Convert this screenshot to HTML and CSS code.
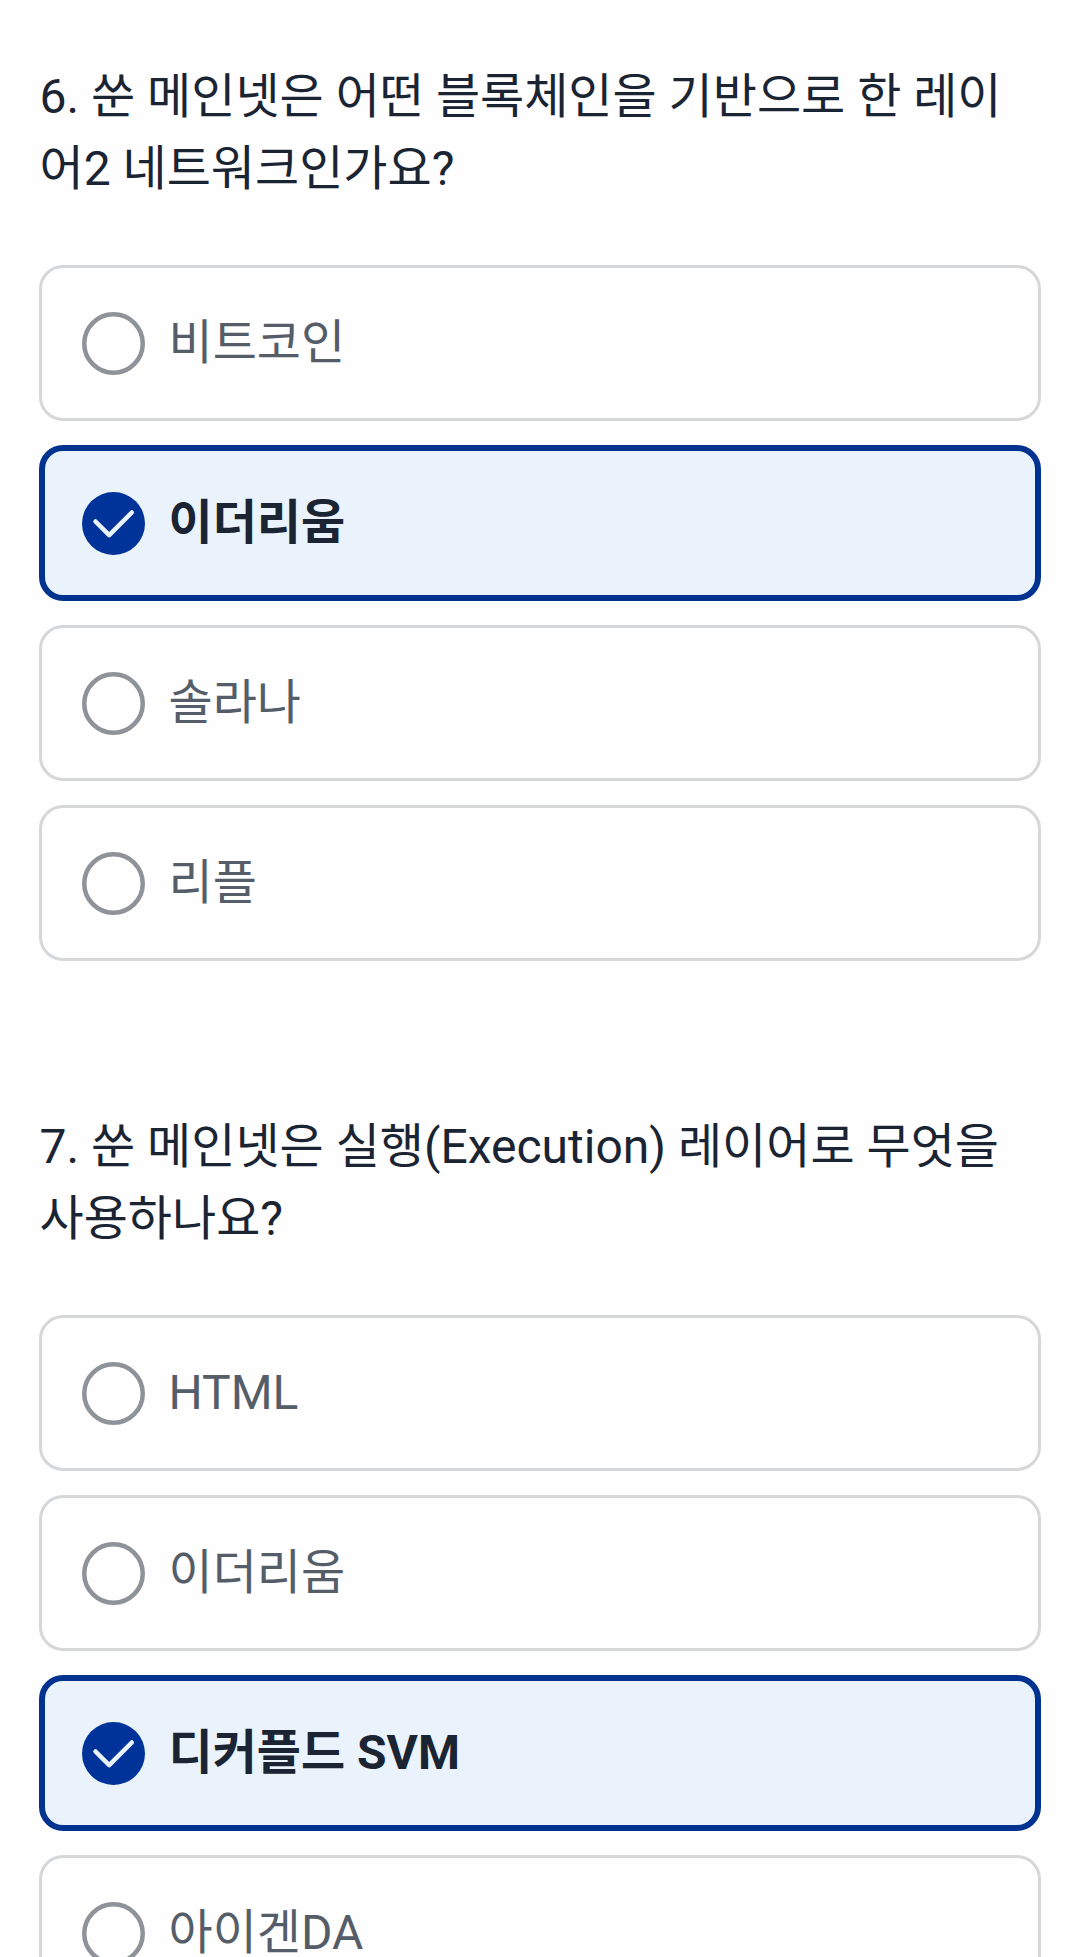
FILE: index.html
```html
<!DOCTYPE html>
<html lang="ko">
<head>
<meta charset="utf-8">
<title>퀴즈</title>
<link rel="stylesheet" href="styles.css">
</head>
<body>
<main class="quiz">
  <section class="question">
    <h2 class="title">6. 쑨 메인넷은 어떤 블록체인을 기반으로 한 레이어2 네트워크인가요?</h2>
    <ul class="options">
      <li class="option"><svg class="radio" viewBox="0 0 63 63"><circle cx="31.5" cy="31.5" r="29.25"/></svg><span class="label">비트코인</span></li>
      <li class="option selected"><svg class="check" viewBox="0 0 63 63"><circle cx="31.5" cy="31.5" r="31.5"/><path d="M13.5 29.5 27.2 43.2 49.8 20.5"/></svg><span class="label">이더리움</span></li>
      <li class="option"><svg class="radio" viewBox="0 0 63 63"><circle cx="31.5" cy="31.5" r="29.25"/></svg><span class="label">솔라나</span></li>
      <li class="option"><svg class="radio" viewBox="0 0 63 63"><circle cx="31.5" cy="31.5" r="29.25"/></svg><span class="label">리플</span></li>
    </ul>
  </section>
  <section class="question">
    <h2 class="title">7. 쑨 메인넷은 실행(Execution) 레이어로 무엇을 사용하나요?</h2>
    <ul class="options">
      <li class="option"><svg class="radio" viewBox="0 0 63 63"><circle cx="31.5" cy="31.5" r="29.25"/></svg><span class="label">HTML</span></li>
      <li class="option"><svg class="radio" viewBox="0 0 63 63"><circle cx="31.5" cy="31.5" r="29.25"/></svg><span class="label">이더리움</span></li>
      <li class="option selected"><svg class="check" viewBox="0 0 63 63"><circle cx="31.5" cy="31.5" r="31.5"/><path d="M13.5 29.5 27.2 43.2 49.8 20.5"/></svg><span class="label">디커플드 SVM</span></li>
      <li class="option"><svg class="radio" viewBox="0 0 63 63"><circle cx="31.5" cy="31.5" r="29.25"/></svg><span class="label">아이겐DA</span></li>
    </ul>
  </section>
</main>
</body>
</html>
```
FILE: styles.css
```css
* {
  box-sizing: border-box;
}

body {
  margin: 0;
  height: 1957px;
  overflow: hidden;
  background: #fefefe;
  color: #1b2433;
  font-family: Roboto, "Noto Sans CJK KR", sans-serif;
  font-size: 48px;
  line-height: 72px;
}

.quiz {
  display: flex;
  flex-direction: column;
  gap: 150px;
  padding: 61px 39px 0;
}

.title {
  margin: 0 0 60px;
  padding-left: 0.5px;
  font-size: 48px;
  font-weight: 400;
  word-break: break-all;
}

.options {
  display: flex;
  flex-direction: column;
  gap: 24px;
  margin: 0;
  padding: 0;
  list-style: none;
}

.option {
  display: flex;
  align-items: center;
  gap: 23.5px;
  height: 156px;
  padding: 0 40px;
  border: 3px solid #d6d7d9;
  border-radius: 24px;
  color: #555d69;
}

.selected {
  padding: 0 37px;
  border: 6px solid #00338f;
  background: #eaf3fc;
  color: #1b2433;
  font-weight: 700;
}

.radio,
.check {
  flex: none;
  width: 63px;
  height: 63px;
}

.radio circle {
  fill: none;
  stroke: #8e9299;
  stroke-width: 4.5;
}

.check circle {
  fill: #003399;
}

.check path {
  fill: none;
  stroke: #eaf3fc;
  stroke-width: 4.5;
  stroke-linecap: round;
  stroke-linejoin: round;
}
```
